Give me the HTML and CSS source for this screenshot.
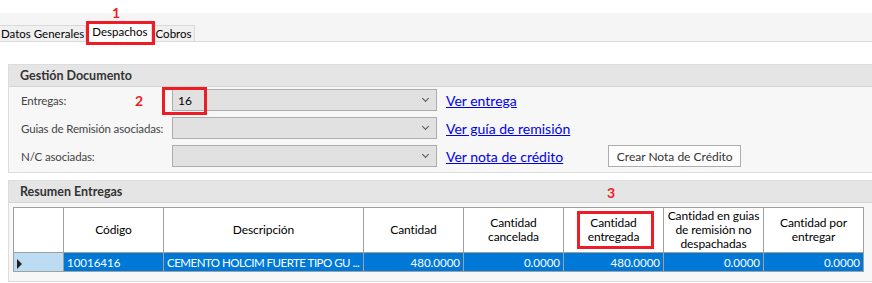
FILE: index.html
```html
<!DOCTYPE html>
<html lang="es">
<head>
  <meta charset="UTF-8" />
  <title>Despachos</title>
  <link rel="stylesheet" href="styles.css">
</head>
<body>
  <div class="tabstrip">
    <div class="tab">Datos Generales</div>
    <div class="tab active">Despachos</div>
    <div class="tab">Cobros</div>
  </div>

  <div class="panel gestion">
    <div class="panel-head">Gestión Documento</div>
    <div class="panel-body">
      <div class="field">
        <label>Entregas:</label>
        <div class="combo"><span>16</span><i class="arrow"></i></div>
        <a href="#">Ver entrega</a>
      </div>
      <div class="field">
        <label>Guias de Remisión asociadas:</label>
        <div class="combo"><span></span><i class="arrow"></i></div>
        <a href="#">Ver guía de remisión</a>
      </div>
      <div class="field">
        <label>N/C asociadas:</label>
        <div class="combo"><span></span><i class="arrow"></i></div>
        <a href="#">Ver nota de crédito</a>
        <button class="btn">Crear Nota de Crédito</button>
      </div>
    </div>
  </div>

  <div class="panel resumen">
    <div class="panel-head">Resumen Entregas</div>
    <div class="panel-body">
      <table class="grid">
        <thead>
          <tr>
            <th class="rowhead"></th>
            <th>Código</th>
            <th class="wide">Descripción</th>
            <th>Cantidad</th>
            <th>Cantidad cancelada</th>
            <th>Cantidad entregada</th>
            <th>Cantidad en guias de remisión no despachadas</th>
            <th>Cantidad por entregar</th>
          </tr>
        </thead>
        <tbody>
          <tr class="selected">
            <td class="rowhead"><i class="pointer"></i></td>
            <td class="left">10016416</td>
            <td class="left">CEMENTO HOLCIM FUERTE TIPO GU ...</td>
            <td>480.0000</td>
            <td>0.0000</td>
            <td>480.0000</td>
            <td>0.0000</td>
            <td>0.0000</td>
          </tr>
        </tbody>
      </table>
    </div>
  </div>

  <!-- marcas rojas de la captura -->
  <span class="mark num1">1</span>
  <span class="mark box1"></span>
  <span class="mark num2">2</span>
  <span class="mark box2"></span>
  <span class="mark num3">3</span>
  <span class="mark box3"></span>
</body>
</html>
```

FILE: styles.css
```css
body {
  margin: 0;
  background: #fff;
  font-family: Lato, "Noto Sans", sans-serif;
  font-size: 12px;
  color: #222;
  height: 283px;
  overflow: hidden;
  position: relative;
}

.tabstrip {
  margin-top: 13px;
  height: 28px;
  background: #f5f5f5;
  border-bottom: 1px solid #dadada;
  display: flex;
  align-items: flex-end;
}
.tab {
  height: 15px;
  line-height: 15px;
  padding: 0 2px;
  background: #f0f0f0;
  border: 1px solid #d9d9d9;
  border-bottom: none;
  font-size: 11.5px;
  color: #000;
  white-space: nowrap;
}
.tab:first-child { border-left: none; padding: 0 1px 0 1px; }
.tab.active {
  background: #fff;
  height: 19px;
  margin: 0 1px -1px 2px;
  padding: 0 3px;
  line-height: 17px;
}

.panel {
  margin-left: 8px;
  border: 1px solid #dcdcdc;
  border-right: none;
  background: #f7f7f7;
}
.gestion { margin-top: 22px; }
.resumen { margin-top: 7px; height: 100px; }
.panel-head {
  height: 21px;
  line-height: 21px;
  background: #e5e5e5;
  border-bottom: 1px solid #d4d4d4;
  padding-left: 11px;
  font-weight: bold;
  font-size: 12.5px;
  color: #333;
}

.gestion .panel-body {
  padding: 2px 0 5px 12px;
  display: flex;
  flex-direction: column;
  gap: 6px;
}
.field {
  display: flex;
  align-items: center;
  height: 22px;
}
.field label {
  width: 151px;
  color: #444;
  white-space: nowrap;
  font-size: 11.5px;
  letter-spacing: -0.15px;
}
.combo {
  width: 250px;
  height: 20px;
  background: #e1e1e1;
  border: 1px solid #adadad;
  display: flex;
  align-items: center;
  justify-content: space-between;
  padding: 0 8px 0 5px;
  margin-right: 9px;
}
.combo span { color: #000; }
.arrow {
  width: 4px;
  height: 4px;
  border-right: 1px solid #555;
  border-bottom: 1px solid #555;
  transform: rotate(45deg);
  margin-top: -3px;
}
.field a {
  color: #0000ee;
  font-size: 14px;
  text-decoration: underline;
}
.btn {
  margin-left: 45px;
  height: 22px;
  width: 133px;
  background: #fdfdfd;
  border: 1px solid #adadad;
  font-family: inherit;
  font-size: 12px;
  color: #333;
  padding: 0;
}

.resumen .panel-body {
  padding: 4px 0 0 4px;
}
.grid {
  border-collapse: collapse;
  table-layout: fixed;
  width: 851px;
  background: #fff;
  border: 1px solid #a0a0a0;
}
.grid th,
.grid td {
  width: 100px;
  border-right: 1px solid #a0a0a0;
  padding: 0 3px;
  box-sizing: border-box;
}
.grid th {
  height: 45px;
  padding: 0 1px;
  font-weight: normal;
  color: #000;
  text-align: center;
  line-height: 14px;
  letter-spacing: -0.1px;
  border-bottom: 1px solid #a0a0a0;
}
.grid th.wide,
.grid td:nth-child(3) { width: 200px; }
.grid .rowhead { width: 50px; }
.grid td {
  height: 19px;
  text-align: right;
  color: #fff;
  white-space: nowrap;
  overflow: hidden;
  font-size: 11.5px;
}
.grid td:nth-child(3) { letter-spacing: -0.5px; padding-left: 3px; }
.grid td.left { text-align: left; }
.selected td { background: #0078d7; }
.selected td.rowhead { background: #bcdcf4; text-align: left; }
.pointer {
  display: inline-block;
  width: 0;
  height: 0;
  border-top: 5px solid transparent;
  border-bottom: 5px solid transparent;
  border-left: 5px solid #222;
  vertical-align: middle;
}

.mark { position: absolute; color: #ee1c24; font-weight: bold; font-size: 14px; }
.mark[class*="box"] { border: 3px solid #ee1c24; box-sizing: border-box; }
.num1 { left: 112px; top: 4px; }
.box1 { left: 86px; top: 21px; width: 69px; height: 24px; }
.num2 { left: 135px; top: 92px; }
.box2 { left: 162px; top: 87px; width: 45px; height: 28px; }
.num3 { left: 607px; top: 184px; }
.box3 { left: 577px; top: 211px; width: 77px; height: 38px; }
```
